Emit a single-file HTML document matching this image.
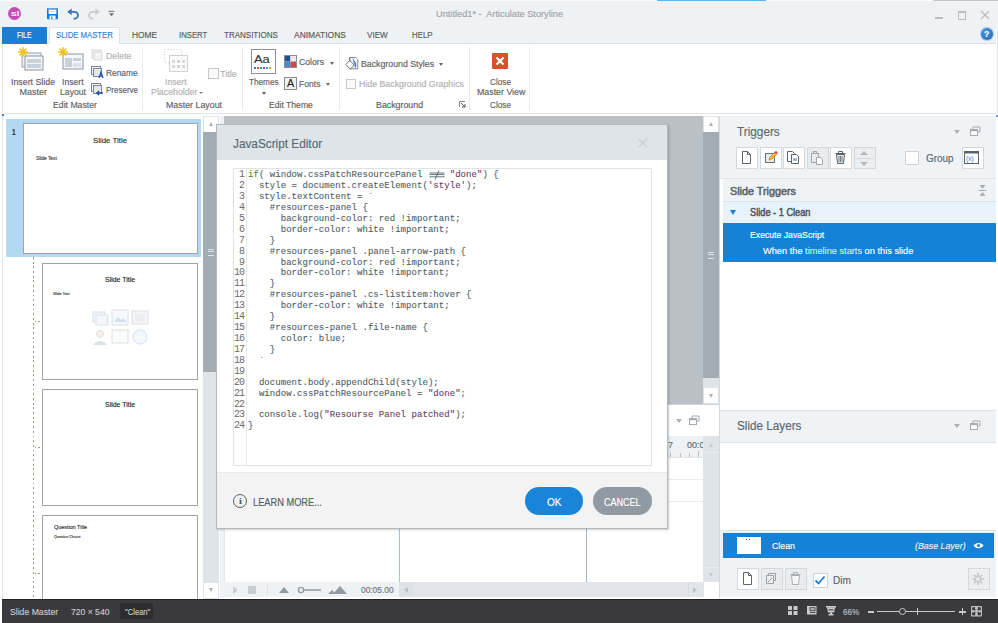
<!DOCTYPE html><html><head><meta charset="utf-8"><style>
html,body{margin:0;padding:0;width:998px;height:623px;overflow:hidden;background:#fff;}
body>div,body>svg{position:absolute;box-sizing:content-box;}
.t{white-space:pre;transform-origin:0 50%;-webkit-text-stroke:0.15px currentColor;}
.code{font-family:'Liberation Mono',monospace;font-size:9px;line-height:10.92px;white-space:pre;-webkit-text-stroke:0.1px currentColor;letter-spacing:0.05px;}
.ln{font-size:10px;letter-spacing:-1px;-webkit-text-stroke:0;}
.s{color:#6b3b60}
</style></head><body>
<div style="left:0px;top:0px;width:998px;height:27px;background:#eef2f5;"></div>
<div style="left:0px;top:0px;width:998px;height:1px;background:#fbfcfd;"></div>
<div style="left:657px;top:0px;width:109px;height:1px;background:#5ab4f0;"></div>
<div style="left:933px;top:0px;width:65px;height:1px;background:#c3c5c7;"></div>
<div style="left:8px;top:7px;width:13px;height:13px;border-radius:50%;background:#c34fb5;"></div>
<div id="t0" class="t" style="left:10.5px;top:7.80px;font-size:8px;line-height:11px;color:#fff;font-weight:normal;font-family:'Liberation Sans', sans-serif;transform:scaleX(1.4167);">sl</div>
<svg style="position:absolute;left:46.5px;top:8.4px" width="11" height="11.2" viewBox="0 0 11 11.2">
<rect x="0" y="0" width="11" height="11.2" rx="0.6" fill="#1a78d0"/><rect x="0.5" y="0" width="10" height="1.3" fill="#62a6e4"/>
<rect x="1.6" y="1.6" width="7.8" height="4.4" fill="#fff"/><rect x="3" y="3.2" width="5" height="0.9" fill="#c5d6e8"/>
<rect x="2.5" y="7.6" width="6" height="3.6" fill="#fff"/><rect x="4.2" y="8.6" width="1.3" height="2.6" fill="#1a78d0"/></svg>
<svg style="position:absolute;left:66px;top:7px" width="14" height="13" viewBox="0 0 14 13">
<path d="M1.2 4.8L5.6 1.4V8.2z" fill="#3a72b8"/><path d="M5 4.8H8.6A3.4 3.4 0 0 1 8.6 11.6H7.6" fill="none" stroke="#3a72b8" stroke-width="1.8"/></svg>
<svg style="position:absolute;left:87px;top:7px" width="14" height="13" viewBox="0 0 14 13">
<path d="M12.8 4.8L8.4 1.4V8.2z" fill="#c8ccd0"/><path d="M9 4.8H5.4A3.4 3.4 0 0 0 5.4 11.6H6.4" fill="none" stroke="#c8ccd0" stroke-width="1.8"/></svg>
<svg style="position:absolute;left:108px;top:10px" width="7" height="7" viewBox="0 0 7 7">
<rect x="0.5" y="0.8" width="6" height="1" fill="#707070"/><path d="M1 3.2h5l-2.5 3z" fill="#707070"/></svg>
<div id="t1" class="t" style="left:436px;top:8.01px;font-size:9px;line-height:13px;color:#a0a4a8;font-weight:normal;font-family:'Liberation Sans', sans-serif;transform:scaleX(1.0242);">Untitled1* -  Articulate Storyline</div>
<div style="left:935px;top:17px;width:8px;height:2px;background:#b9bdc1;"></div>
<div style="left:958px;top:11px;width:6px;height:6px;border:1px solid #b9bdc1;border-top-width:2px;"></div>
<svg style="position:absolute;left:980px;top:10px" width="10" height="10" viewBox="0 0 10 10">
<path d="M1 1l8 8M9 1l-8 8" stroke="#b9bdc1" stroke-width="1.1"/></svg>
<div style="left:0px;top:27px;width:998px;height:17px;background:#eef2f5;"></div>
<div style="left:2px;top:43px;width:996px;height:1px;background:#dde2e6;"></div>
<div style="left:2px;top:27px;width:45px;height:17px;background:#1a7fd4;"></div>
<div id="t2" class="t" style="left:17px;top:29.30px;font-size:8.5px;line-height:12px;color:#fff;font-weight:normal;font-family:'Liberation Sans', sans-serif;transform:scaleX(0.8056);">FILE</div>
<div style="left:49px;top:27px;width:69px;height:17px;background:#fff;border:1px solid #dde2e6;border-bottom:none;"></div>
<div id="t3" class="t" style="left:55.5px;top:29.30px;font-size:8.5px;line-height:12px;color:#2b7fd4;font-weight:normal;font-family:'Liberation Sans', sans-serif;transform:scaleX(0.9113);">SLIDE MASTER</div>
<div id="t4" class="t" style="left:132.4px;top:29.30px;font-size:8.5px;line-height:12px;color:#5a5a5a;font-weight:normal;font-family:'Liberation Sans', sans-serif;transform:scaleX(0.9846);">HOME</div>
<div id="t5" class="t" style="left:178.5px;top:29.30px;font-size:8.5px;line-height:12px;color:#5a5a5a;font-weight:normal;font-family:'Liberation Sans', sans-serif;transform:scaleX(0.9097);">INSERT</div>
<div id="t6" class="t" style="left:224px;top:29.30px;font-size:8.5px;line-height:12px;color:#5a5a5a;font-weight:normal;font-family:'Liberation Sans', sans-serif;transform:scaleX(0.9421);">TRANSITIONS</div>
<div id="t7" class="t" style="left:294px;top:29.30px;font-size:8.5px;line-height:12px;color:#5a5a5a;font-weight:normal;font-family:'Liberation Sans', sans-serif;transform:scaleX(0.9923);">ANIMATIONS</div>
<div id="t8" class="t" style="left:367px;top:29.30px;font-size:8.5px;line-height:12px;color:#5a5a5a;font-weight:normal;font-family:'Liberation Sans', sans-serif;transform:scaleX(0.9545);">VIEW</div>
<div id="t9" class="t" style="left:411.6px;top:29.30px;font-size:8.5px;line-height:12px;color:#5a5a5a;font-weight:normal;font-family:'Liberation Sans', sans-serif;transform:scaleX(0.9273);">HELP</div>
<div style="left:981px;top:28px;width:12px;height:12px;border-radius:50%;background:radial-gradient(circle at 40% 35%,#4a9be8,#1a5fb0);box-shadow:0 0 0 1px #a8c8ea;"></div>
<div id="t10" class="t" style="left:984.3px;top:28.01px;font-size:9px;line-height:13px;color:#fff;font-weight:bold;font-family:'Liberation Sans', sans-serif;transform:scaleX(0.9500);">?</div>
<div style="left:996px;top:27px;width:2px;height:571px;background:#fff;"></div>
<div style="left:997px;top:27px;width:1px;height:571px;background:#dfe3e6;"></div>
<div style="left:2px;top:44px;width:994px;height:69px;background:#fff;"></div>
<div style="left:2px;top:44px;width:1px;height:69px;background:#e3e6e9;"></div>
<div style="left:5px;top:113px;width:991px;height:1px;background:#dfe3e7;"></div>
<div style="left:142px;top:47px;width:1px;height:63px;background:#e8ebee;"></div>
<div style="left:242px;top:47px;width:1px;height:63px;background:#e8ebee;"></div>
<div style="left:339px;top:47px;width:1px;height:63px;background:#e8ebee;"></div>
<div style="left:469px;top:47px;width:1px;height:63px;background:#e8ebee;"></div>
<div style="left:529px;top:47px;width:1px;height:63px;background:#e8ebee;"></div>
<svg style="position:absolute;left:18px;top:46.5px" width="26" height="24" viewBox="0 0 26 24">
<rect x="4" y="6" width="19" height="14" fill="#eef0f4" stroke="#9aa3ad"/>
<rect x="7" y="9" width="18" height="14" fill="#f5f6f8" stroke="#8a95a2"/>
<rect x="9" y="12" width="14" height="4" fill="#c9d0da"/><rect x="9" y="17" width="14" height="4" fill="#c9d0da"/>
<g stroke="#f2c21a" stroke-width="1.5"><path d="M5 0v10M0 5h10M1.5 1.5l7 7M8.5 1.5l-7 7"/></g></svg>
<svg style="position:absolute;left:58px;top:47px" width="26" height="24" viewBox="0 0 26 24">
<rect x="5" y="7" width="20" height="15" fill="#f5f6f8" stroke="#8a95a2"/>
<rect x="7" y="11" width="7" height="9" fill="#c9d0da"/><rect x="15" y="11" width="8" height="3" fill="#c9d0da"/><rect x="15" y="16" width="8" height="4" fill="#dde2e8"/>
<g stroke="#f2c21a" stroke-width="1.5"><path d="M5 0v10M0 5h10M1.5 1.5l7 7M8.5 1.5l-7 7"/></g></svg>
<div id="t11" class="t" style="left:11px;top:75.71px;font-size:9px;line-height:13px;color:#5e5e5e;font-weight:normal;font-family:'Liberation Sans', sans-serif;transform:scaleX(0.9778);">Insert Slide</div>
<div id="t12" class="t" style="left:19.5px;top:86.11px;font-size:9px;line-height:13px;color:#5e5e5e;font-weight:normal;font-family:'Liberation Sans', sans-serif;">Master</div>
<div id="t13" class="t" style="left:61.5px;top:75.71px;font-size:9px;line-height:13px;color:#5e5e5e;font-weight:normal;font-family:'Liberation Sans', sans-serif;transform:scaleX(0.9565);">Insert</div>
<div id="t14" class="t" style="left:60px;top:86.11px;font-size:9px;line-height:13px;color:#5e5e5e;font-weight:normal;font-family:'Liberation Sans', sans-serif;transform:scaleX(0.9630);">Layout</div>
<div id="t15" class="t" style="left:52.6px;top:98.51px;font-size:9px;line-height:13px;color:#5e5e5e;font-weight:normal;font-family:'Liberation Sans', sans-serif;transform:scaleX(0.9652);">Edit Master</div>
<svg style="position:absolute;left:91px;top:49px" width="12" height="12" viewBox="0 0 12 12">
<rect x="1" y="1" width="9" height="8" fill="#f4f4f4" stroke="#d4d6d8"/><rect x="3" y="3" width="8" height="8" fill="#f4f4f4" stroke="#d4d6d8"/></svg>
<svg style="position:absolute;left:91px;top:66px" width="13" height="13" viewBox="0 0 13 13">
<rect x="0.5" y="0.5" width="9" height="8" fill="#eef0f3" stroke="#7d8895"/><rect x="2.5" y="2.5" width="8" height="8" fill="#e4e8ee" stroke="#7d8895"/><path d="M8 12l2-6 2 6M8.8 10h2.4" stroke="#2050a8" stroke-width="1.2" fill="none"/></svg>
<svg style="position:absolute;left:91px;top:83px" width="13" height="13" viewBox="0 0 13 13">
<rect x="0.5" y="0.5" width="9" height="8" fill="#eef0f3" stroke="#7d8895"/><rect x="2.5" y="2.5" width="8" height="8" fill="#e4e8ee" stroke="#7d8895"/><path d="M6 10h6M8 8l-2 2 2 2" stroke="#2050a8" stroke-width="1.6" fill="none"/></svg>
<div id="t16" class="t" style="left:106px;top:49.71px;font-size:9px;line-height:13px;color:#b4b4b4;font-weight:normal;font-family:'Liberation Sans', sans-serif;transform:scaleX(0.9808);">Delete</div>
<div id="t17" class="t" style="left:106px;top:66.91px;font-size:9px;line-height:13px;color:#5e5e5e;font-weight:normal;font-family:'Liberation Sans', sans-serif;transform:scaleX(0.9265);">Rename</div>
<div id="t18" class="t" style="left:106px;top:83.71px;font-size:9px;line-height:13px;color:#5e5e5e;font-weight:normal;font-family:'Liberation Sans', sans-serif;transform:scaleX(0.8889);">Preserve</div>
<svg style="position:absolute;left:163px;top:48px" width="26" height="25" viewBox="0 0 26 25">
<rect x="1.5" y="1.5" width="17" height="13" fill="none" stroke="#d6d9dc" stroke-dasharray="1.5 1.5"/>
<rect x="6.5" y="7.5" width="18" height="16" fill="#fbfbfb" stroke="#d0d3d6"/>
<g fill="#d6d9dc"><rect x="9" y="12" width="3" height="3"/><rect x="14" y="12" width="3" height="3"/><rect x="19" y="12" width="3" height="3"/><rect x="9" y="17" width="3" height="3"/><rect x="14" y="17" width="3" height="3"/><rect x="19" y="17" width="3" height="3"/></g></svg>
<div id="t19" class="t" style="left:165px;top:75.71px;font-size:9px;line-height:13px;color:#b0b0b0;font-weight:normal;font-family:'Liberation Sans', sans-serif;transform:scaleX(0.9565);">Insert</div>
<div id="t20" class="t" style="left:151px;top:86.11px;font-size:9px;line-height:13px;color:#b0b0b0;font-weight:normal;font-family:'Liberation Sans', sans-serif;transform:scaleX(0.9792);">Placeholder</div>
<div style="left:199px;top:92px;width:0;height:0;border-left:2.5px solid transparent;border-right:2.5px solid transparent;border-top:2.5px solid #888;"></div>
<div style="left:208px;top:68px;width:9px;height:9px;border:1px solid #c6c8ca;background:#fafafa;"></div>
<div id="t21" class="t" style="left:220px;top:67.71px;font-size:9px;line-height:13px;color:#b0b0b0;font-weight:normal;font-family:'Liberation Sans', sans-serif;">Title</div>
<div id="t22" class="t" style="left:166px;top:98.51px;font-size:9px;line-height:13px;color:#5e5e5e;font-weight:normal;font-family:'Liberation Sans', sans-serif;transform:scaleX(0.9825);">Master Layout</div>
<div style="left:251px;top:49px;width:23px;height:23px;border:1px solid #8a8f94;background:#fff;"></div>
<div id="t23" class="t" style="left:254px;top:51.63px;font-size:10.5px;line-height:15px;color:#333;font-weight:normal;font-family:'Liberation Sans', sans-serif;transform:scaleX(1.2308);">Aa</div>
<svg style="position:absolute;left:254px;top:67px" width="20" height="3" viewBox="0 0 20 3">
<g><rect x="0" y="0" width="2" height="2" fill="#3a78c9"/><rect x="3" y="0" width="2" height="2" fill="#e84a3c"/><rect x="6" y="0" width="2" height="2" fill="#2aa24a"/><rect x="9" y="0" width="2" height="2" fill="#8a4ac9"/><rect x="12" y="0" width="2" height="2" fill="#3aa8c9"/><rect x="15" y="0" width="2" height="2" fill="#f08a2a"/></g></svg>
<div id="t24" class="t" style="left:249px;top:76.11px;font-size:9px;line-height:13px;color:#5e5e5e;font-weight:normal;font-family:'Liberation Sans', sans-serif;transform:scaleX(0.9091);">Themes</div>
<div style="left:262px;top:92px;width:0;height:0;border-left:2.5px solid transparent;border-right:2.5px solid transparent;border-top:3px solid #666;"></div>
<svg style="position:absolute;left:284px;top:55px" width="13" height="13" viewBox="0 0 13 13">
<rect x="0.5" y="0.5" width="12" height="12" fill="#fff" stroke="#8a8f94"/><rect x="1" y="1" width="5.5" height="5.5" fill="#25508e"/><rect x="6.5" y="1" width="5.5" height="5.5" fill="#f1ecdf"/><rect x="1" y="6.5" width="5.5" height="5.5" fill="#4f87c6"/><rect x="6.5" y="6.5" width="5.5" height="5.5" fill="#cf4848"/></svg>
<div id="t25" class="t" style="left:299px;top:56.31px;font-size:9px;line-height:13px;color:#5e5e5e;font-weight:normal;font-family:'Liberation Sans', sans-serif;transform:scaleX(0.9615);">Colors</div>
<div style="left:330px;top:62px;width:0;height:0;border-left:2.5px solid transparent;border-right:2.5px solid transparent;border-top:3px solid #666;"></div>
<div style="left:284px;top:77px;width:11px;height:11px;border:1px solid #8a8f94;background:#eef0f4;"></div>
<div id="t26" class="t" style="left:286.5px;top:77.22px;font-size:10px;line-height:14px;color:#222;font-weight:normal;font-family:'Liberation Sans', sans-serif;transform:scaleX(1.0714);">A</div>
<div id="t27" class="t" style="left:299px;top:77.71px;font-size:9px;line-height:13px;color:#5e5e5e;font-weight:normal;font-family:'Liberation Sans', sans-serif;transform:scaleX(0.9565);">Fonts</div>
<div style="left:326px;top:83px;width:0;height:0;border-left:2.5px solid transparent;border-right:2.5px solid transparent;border-top:3px solid #666;"></div>
<div id="t28" class="t" style="left:269px;top:98.51px;font-size:9px;line-height:13px;color:#5e5e5e;font-weight:normal;font-family:'Liberation Sans', sans-serif;transform:scaleX(0.9565);">Edit Theme</div>
<svg style="position:absolute;left:345px;top:56px" width="14" height="14" viewBox="0 0 14 14">
<path d="M4.5 1.5H10.5L12.8 3.8V12.8H4.5z" fill="#f6f8fa" stroke="#808488"/><circle cx="11" cy="3" r="0.8" fill="#fff"/>
<path d="M7.5 2.5Q9 2.8 9.3 5Q12 6 11 11.5H9.8Q10.3 8 8.5 6.3z" fill="#2f73c0" opacity="0.9"/>
<path d="M0.8 8.5L4.8 4.5L9.3 9L5.3 13z" fill="#fff" stroke="#6a6e72"/><path d="M4.8 4.5V2.2" stroke="#6a6e72"/></svg>
<div id="t29" class="t" style="left:360.6px;top:57.51px;font-size:9px;line-height:13px;color:#5e5e5e;font-weight:normal;font-family:'Liberation Sans', sans-serif;transform:scaleX(0.9733);">Background Styles</div>
<div style="left:439px;top:63px;width:0;height:0;border-left:2.5px solid transparent;border-right:2.5px solid transparent;border-top:3px solid #666;"></div>
<div style="left:346px;top:79px;width:8px;height:8px;border:1px solid #c6c8ca;background:#fafafa;"></div>
<div id="t30" class="t" style="left:358.6px;top:78.31px;font-size:9px;line-height:13px;color:#b0b0b0;font-weight:normal;font-family:'Liberation Sans', sans-serif;transform:scaleX(0.9759);">Hide Background Graphics</div>
<div id="t31" class="t" style="left:376px;top:98.51px;font-size:9px;line-height:13px;color:#5e5e5e;font-weight:normal;font-family:'Liberation Sans', sans-serif;transform:scaleX(0.9792);">Background</div>
<svg style="position:absolute;left:459px;top:101px" width="7" height="7" viewBox="0 0 7 7">
<path d="M0.5 6V0.5H6" fill="none" stroke="#888"/><path d="M2 2l4 4M6 3v3H3" fill="none" stroke="#555"/></svg>
<div style="left:492px;top:53px;width:16px;height:16px;background:#d9512c;border-radius:1px;"></div>
<svg style="position:absolute;left:492px;top:53px" width="16" height="16" viewBox="0 0 16 16">
<path d="M4.5 4.5l7 7M11.5 4.5l-7 7" stroke="#fff" stroke-width="2.2"/></svg>
<div id="t32" class="t" style="left:490px;top:76.11px;font-size:9px;line-height:13px;color:#5e5e5e;font-weight:normal;font-family:'Liberation Sans', sans-serif;transform:scaleX(0.9130);">Close</div>
<div id="t33" class="t" style="left:477px;top:86.11px;font-size:9px;line-height:13px;color:#5e5e5e;font-weight:normal;font-family:'Liberation Sans', sans-serif;transform:scaleX(0.9796);">Master View</div>
<div id="t34" class="t" style="left:490px;top:98.51px;font-size:9px;line-height:13px;color:#5e5e5e;font-weight:normal;font-family:'Liberation Sans', sans-serif;transform:scaleX(0.9130);">Close</div>
<div style="left:0px;top:114px;width:998px;height:485px;background:#fff;"></div>
<div style="left:2px;top:114px;width:1px;height:485px;background:#e3e6e9;"></div>
<div style="left:2px;top:114px;width:2px;height:2px;background:#2a7fd4;"></div>
<div style="left:6px;top:119px;width:195px;height:138px;background:#b3d8f3;"></div>
<div style="left:23px;top:123px;width:173px;height:129px;border:1px solid #a3a3a3;background:#fff;"></div>
<div id="t35" class="t" style="left:12.2px;top:126.21px;font-size:9px;line-height:13px;color:#333;font-weight:bold;font-family:'Liberation Sans', sans-serif;transform:scaleX(0.7200);">1</div>
<div id="t36" class="t" style="left:93.3px;top:135.20px;font-size:8px;line-height:11px;color:#1a1a1a;font-weight:normal;font-family:'Liberation Sans', sans-serif;transform:scaleX(0.9800);-webkit-text-stroke:0.1px #1a1a1a;">Slide Title</div>
<div id="t37" class="t" style="left:35.8px;top:155.85px;font-size:4.5px;line-height:6px;color:#444;font-weight:normal;font-family:'Liberation Sans', sans-serif;transform:scaleX(1.0684);">Slide Text</div>
<div style="left:33px;top:257px;width:1px;height:341px;background:repeating-linear-gradient(to bottom,#a49c80 0,#a49c80 1.8px,transparent 1.8px,transparent 4.7px);"></div>
<div style="left:35px;top:321px;width:7px;height:1px;background:repeating-linear-gradient(to right,#a49c80 0,#a49c80 1.5px,transparent 1.5px,transparent 3.5px);"></div>
<div style="left:35px;top:447px;width:7px;height:1px;background:repeating-linear-gradient(to right,#a49c80 0,#a49c80 1.5px,transparent 1.5px,transparent 3.5px);"></div>
<div style="left:35px;top:573px;width:7px;height:1px;background:repeating-linear-gradient(to right,#a49c80 0,#a49c80 1.5px,transparent 1.5px,transparent 3.5px);"></div>
<div style="left:42px;top:263px;width:154px;height:115px;border:1px solid #a3a3a3;background:#fff;"></div>
<div id="t38" class="t" style="left:104.5px;top:274.58px;font-size:6.5px;line-height:9px;color:#1a1a1a;font-weight:normal;font-family:'Liberation Sans', sans-serif;transform:scaleX(1.0714);-webkit-text-stroke:0.12px #1a1a1a;">Slide Title</div>
<div id="t39" class="t" style="left:52.6px;top:292.24px;font-size:3.5px;line-height:5px;color:#444;font-weight:normal;font-family:'Liberation Sans', sans-serif;transform:scaleX(1.0933);">Slide Text</div>
<svg style="position:absolute;left:90px;top:309px" width="60" height="40" viewBox="0 0 60 40" opacity="0.35">
<rect x="3" y="3" width="12" height="10" fill="#cfe0ef" stroke="#9ab"/><rect x="6" y="6" width="12" height="10" fill="#dde8f2" stroke="#9ab"/>
<rect x="22" y="1" width="16" height="15" fill="#e8f0f8" stroke="#9ab"/><path d="M24 13l4-5 3 3 2-2 4 4z" fill="#7aa6d6"/>
<rect x="42" y="2" width="16" height="13" fill="#e0e4e8" stroke="#9ab"/><rect x="45" y="5" width="10" height="7" fill="#c8ced4"/>
<circle cx="10" cy="25" r="3.5" fill="#f0d8c0" stroke="#9ab"/><path d="M4 36c0-5 12-5 12 0z" fill="#9ab"/>
<rect x="22" y="21" width="16" height="13" fill="#f2f4f6" stroke="#9ab"/>
<circle cx="50" cy="28" r="7" fill="#dcecf8" stroke="#7aa6d6"/></svg>
<div style="left:42px;top:389px;width:154px;height:115px;border:1px solid #a3a3a3;background:#fff;"></div>
<div id="t40" class="t" style="left:104.5px;top:400.28px;font-size:6.5px;line-height:9px;color:#1a1a1a;font-weight:normal;font-family:'Liberation Sans', sans-serif;transform:scaleX(1.0714);-webkit-text-stroke:0.12px #1a1a1a;">Slide Title</div>
<div style="left:42px;top:515px;width:154px;height:100px;border:1px solid #a3a3a3;border-bottom:none;background:#fff;"></div>
<div id="t41" class="t" style="left:53.5px;top:522.57px;font-size:5.5px;line-height:8px;color:#333;font-weight:normal;font-family:'Liberation Sans', sans-serif;transform:scaleX(0.9853);">Question Title</div>
<div id="t42" class="t" style="left:53.5px;top:534.54px;font-size:3.5px;line-height:5px;color:#444;font-weight:normal;font-family:'Liberation Sans', sans-serif;transform:scaleX(1.0192);">Question Choice</div>
<div style="left:203px;top:116px;width:16px;height:482px;background:#dfe4e8;"></div>
<div style="left:203px;top:116px;width:14px;height:15px;border:1px solid #dfe3e6;border-bottom:none;background:#fff;"></div>
<div style="left:208.5px;top:122px;width:0;height:0;border-left:2.5px solid transparent;border-right:2.5px solid transparent;border-bottom:4.5px solid #a9b2b8;"></div>
<div style="left:203px;top:132px;width:16px;height:240px;background:#a3acb2;"></div>
<div style="left:208px;top:249px;width:6px;height:5px;border-top:1px solid #dfe4e8;border-bottom:1px solid #dfe4e8;"></div><div style="left:208px;top:251px;width:6px;height:1px;background:#dfe4e8;"></div>
<div style="left:203px;top:582px;width:14px;height:15px;border:1px solid #dfe3e6;background:#fff;"></div>
<div style="left:208.5px;top:588px;width:0;height:0;border-left:2.5px solid transparent;border-right:2.5px solid transparent;border-top:4.5px solid #a9b2b8;"></div>
<div style="left:220px;top:116px;width:4px;height:482px;background:#f1f2f3;"></div>
<div style="left:224px;top:116px;width:1px;height:482px;background:#e4e8eb;"></div>
<div style="left:224px;top:116px;width:479px;height:288px;background:#b9c0c6;"></div>
<div style="left:703px;top:116px;width:16px;height:288px;background:#dfe4e8;"></div>
<div style="left:703px;top:116px;width:14px;height:15px;border:1px solid #dfe3e6;border-bottom:none;background:#fff;"></div>
<div style="left:708.5px;top:122px;width:0;height:0;border-left:2.5px solid transparent;border-right:2.5px solid transparent;border-bottom:4.5px solid #a9b2b8;"></div>
<div style="left:703px;top:132px;width:16px;height:246px;background:#a3acb2;"></div>
<div style="left:708px;top:252px;width:6px;height:5px;border-top:1px solid #dfe4e8;border-bottom:1px solid #dfe4e8;"></div><div style="left:708px;top:254px;width:6px;height:1px;background:#dfe4e8;"></div>
<div style="left:703px;top:388px;width:14px;height:15px;border:1px solid #dfe3e6;border-top:none;background:#fff;"></div>
<div style="left:708.5px;top:394px;width:0;height:0;border-left:2.5px solid transparent;border-right:2.5px solid transparent;border-top:4.5px solid #a9b2b8;"></div>
<div style="left:224px;top:404px;width:495px;height:1px;background:#cdd3d8;"></div>
<div style="left:676px;top:419px;width:0;height:0;border-left:3.5px solid transparent;border-right:3.5px solid transparent;border-top:4px solid #a9b1b7;"></div>
<svg style="position:absolute;left:689px;top:415px" width="11" height="11" viewBox="0 0 11 11">
<path d="M3 3.5V1h7v5H8" fill="none" stroke="#a3abb1"/><rect x="0.5" y="3.5" width="7" height="6" fill="#fff" stroke="#a3abb1"/><rect x="1" y="4" width="6" height="1.2" fill="#a3abb1"/></svg>
<div style="left:224px;top:436px;width:479px;height:21px;background:#eef2f5;"></div>
<div style="left:224px;top:436px;width:479px;height:21px;overflow:hidden;"><div class="t" style="left:463px;top:-1px;font-size:9px;line-height:21px;color:#4d6b88;position:absolute;font-family:Liberation Sans;">00:00</div></div>
<div id="t43" class="t" style="left:668px;top:439.01px;font-size:9px;line-height:13px;color:#5e6f7d;font-weight:normal;font-family:'Liberation Sans', sans-serif;">7</div>
<div style="left:670px;top:453px;width:1px;height:4px;background:#b9c1c7;"></div>
<div style="left:680px;top:453px;width:1px;height:4px;background:#b9c1c7;"></div>
<div style="left:689px;top:453px;width:1px;height:4px;background:#b9c1c7;"></div>
<div style="left:698px;top:451px;width:1px;height:6px;background:#b9c1c7;"></div>
<div style="left:224px;top:457px;width:479px;height:1px;background:#e2e6ea;"></div>
<div style="left:224px;top:479px;width:479px;height:1px;background:#e8ebee;"></div>
<div style="left:224px;top:501px;width:479px;height:1px;background:#e8ebee;"></div>
<div style="left:399px;top:458px;width:1px;height:124px;background:#9cc3e6;"></div>
<div style="left:586px;top:458px;width:1px;height:124px;background:#a9b2b8;"></div>
<div style="left:703px;top:436px;width:16px;height:146px;background:#dfe4e8;"></div>
<div style="left:708.5px;top:443px;width:0;height:0;border-left:2.5px solid transparent;border-right:2.5px solid transparent;border-bottom:4.5px solid #c3c9ce;"></div>
<div style="left:703px;top:452px;width:16px;height:1px;background:#e9ecef;"></div>
<div style="left:703px;top:567px;width:16px;height:1px;background:#e9ecef;"></div>
<div style="left:708.5px;top:573px;width:0;height:0;border-left:2.5px solid transparent;border-right:2.5px solid transparent;border-top:4.5px solid #c3c9ce;"></div>
<div style="left:224px;top:582px;width:175px;height:15px;background:#eef2f5;"></div>
<div style="left:233px;top:586px;width:0;height:0;border-top:4px solid transparent;border-bottom:4px solid transparent;border-left:5px solid #c8ced3;"></div>
<div style="left:248px;top:586px;width:8px;height:8px;background:#c8ced3;"></div>
<div style="left:267px;top:585px;width:1px;height:11px;background:#dde2e6;"></div>
<div style="left:279px;top:587px;width:0;height:0;border-left:5px solid transparent;border-right:5px solid transparent;border-bottom:6px solid #8f9aa2;"></div>
<svg style="position:absolute;left:296px;top:585px" width="26" height="10" viewBox="0 0 26 10">
<path d="M6 5h19" stroke="#8f9aa2" stroke-width="1.5"/><circle cx="5" cy="5" r="2.6" fill="#eef2f5" stroke="#8f9aa2" stroke-width="1.4"/></svg>
<div style="left:328px;top:590px;width:0;height:0;border-left:4px solid transparent;border-right:4px solid transparent;border-bottom:4px solid #8f9aa2;"></div>
<div style="left:333px;top:586px;width:0;height:0;border-left:7px solid transparent;border-right:7px solid transparent;border-bottom:8px solid #8f9aa2;"></div>
<div id="t44" class="t" style="left:360.5px;top:584.31px;font-size:9px;line-height:13px;color:#6b757c;font-weight:normal;font-family:'Liberation Sans', sans-serif;transform:scaleX(0.9286);">00:05.00</div>
<div style="left:399px;top:582px;width:305px;height:15px;background:#e2e6ea;"></div>
<div style="left:399px;top:582px;width:14px;height:15px;background:#dde2e6;"></div>
<div style="left:404px;top:587px;width:0;height:0;border-top:3.5px solid transparent;border-bottom:3.5px solid transparent;border-right:4px solid #b9c0c6;"></div>
<div style="left:688px;top:582px;width:1px;height:15px;background:#d6dbdf;"></div>
<div style="left:693px;top:587px;width:0;height:0;border-top:3.5px solid transparent;border-bottom:3.5px solid transparent;border-left:4px solid #b9c0c6;"></div>
<div style="left:704px;top:582px;width:15px;height:17px;background:#fff;"></div>
<div style="left:216px;top:124px;width:450px;height:403px;border:1px solid #b4b9bd;background:#fff;box-shadow:1px 1px 2px rgba(0,0,0,0.2);"></div>
<div style="left:217px;top:125px;width:450px;height:35px;background:#dfe4e8;"></div>
<div id="t45" class="t" style="left:232.8px;top:136.15px;font-size:12.2px;line-height:17px;color:#5b6a72;font-weight:normal;font-family:'Liberation Sans', sans-serif;transform:scaleX(0.9674);">JavaScript Editor</div>
<svg style="position:absolute;left:638px;top:138px" width="10" height="10" viewBox="0 0 10 10">
<path d="M1 1l8 8M9 1l-8 8" stroke="#cbcdcf" stroke-width="1.3"/></svg>
<div style="left:233px;top:168px;width:417px;height:296px;border:1px solid #dfe3e6;background:#fff;"></div>
<div style="left:246px;top:169px;width:1px;height:296px;background:#e9e9e9;"></div>
<div class="code ln" style="left:222px;top:170.20px;width:22px;text-align:right;color:#6b6b6b;">1
2
3
4
5
6
7
8
9
10
11
12
13
14
15
16
17
18
19
20
21
22
23
24</div>
<div class="code" style="left:248px;top:170.20px;width:400px;color:#4e5d64;"><span style="color:#5c7d3b">if</span>( window.cssPatchResourcePanel     <span class="s">"done"</span>) {
  style = document.createElement(<span class="s">'style'</span>);
  style.textContent = `
    #resources-panel {
      background-color: red !important;
      border-color: white !important;
    }
    #resources-panel .panel-arrow-path {
      background-color: red !important;
      border-color: white !important;
    }
    #resources-panel .cs-listitem:hover {
      border-color: white !important;
    }
    #resources-panel .file-name {
      color: blue;
    }
  `

  document.body.appendChild(style);
  window.cssPatchResourcePanel = <span class="s">"done"</span>;

  console.log(<span class="s">"Resourse Panel patched"</span>);
}</div>
<svg style="position:absolute;left:428.5px;top:169.5px" width="16" height="10" viewBox="0 0 16 10"><path d="M0.5 3h15M0.5 4.6h15M0.5 6.8h15" stroke="#56646b" stroke-width="0.9"/><path d="M10 0.5L6 9.5" stroke="#56646b" stroke-width="0.9"/></svg>
<div style="left:217px;top:473px;width:450px;height:55px;background:#f3f3f3;"></div>
<div style="left:217px;top:472px;width:450px;height:1px;background:#e6e9eb;"></div>
<div style="left:233px;top:494px;width:12px;height:12px;border:1.6px solid #4f5f66;border-radius:50%;"></div>
<div id="t46" class="t" style="left:238.7px;top:495.21px;font-size:9px;line-height:13px;color:#4f5f66;font-weight:bold;font-family:'Liberation Serif', serif;transform:scaleX(1.1667);">i</div>
<div id="t47" class="t" style="left:252.6px;top:495.52px;font-size:10px;line-height:14px;color:#4f5f66;font-weight:normal;font-family:'Liberation Sans', sans-serif;transform:scaleX(0.9257);">LEARN MORE...</div>
<div style="left:524.5px;top:487.3px;width:58.7px;height:28px;border-radius:14px;background:#1a84d8;"></div>
<div id="t48" class="t" style="left:547px;top:495.82px;font-size:10px;line-height:14px;color:#fff;font-weight:normal;font-family:'Liberation Sans', sans-serif;">OK</div>
<div style="left:593px;top:487.3px;width:58.8px;height:28px;border-radius:14px;background:#8f9aa2;"></div>
<div id="t49" class="t" style="left:604px;top:495.82px;font-size:10px;line-height:14px;color:#fff;font-weight:normal;font-family:'Liberation Sans', sans-serif;transform:scaleX(0.9024);">CANCEL</div>
<div style="left:719px;top:116px;width:277px;height:482px;background:#fff;"></div>
<div style="left:996px;top:115px;width:2px;height:2px;background:#2a7fd4;border-radius:1px;"></div>
<div style="left:719px;top:116px;width:1px;height:482px;background:#d3d9de;"></div>
<div style="left:720px;top:116px;width:276px;height:62px;background:#eff3f6;"></div>
<div style="left:720px;top:178px;width:276px;height:1px;background:#dde3e8;"></div>
<div id="t50" class="t" style="left:737px;top:123.05px;font-size:12.6px;line-height:18px;color:#5c6870;font-weight:normal;font-family:'Liberation Sans', sans-serif;transform:scaleX(0.9348);">Triggers</div>
<div style="left:954px;top:130px;width:0;height:0;border-left:3.5px solid transparent;border-right:3.5px solid transparent;border-top:4px solid #a9b1b7;"></div>
<svg style="position:absolute;left:970px;top:126px" width="11" height="11" viewBox="0 0 11 11">
<path d="M3 3.5V1h7v5H8" fill="none" stroke="#a3abb1"/><rect x="0.5" y="3.5" width="7" height="6" fill="#fff" stroke="#a3abb1"/><rect x="1" y="4" width="6" height="1.2" fill="#a3abb1"/></svg>
<div style="left:736px;top:147px;width:20px;height:20px;border:1px solid #d2d8dc;background:#fff;"></div>
<div style="left:760px;top:147px;width:20px;height:20px;border:1px solid #d2d8dc;background:#fff;"></div>
<div style="left:783px;top:147px;width:20px;height:20px;border:1px solid #d2d8dc;background:#fff;"></div>
<div style="left:806.5px;top:147px;width:20px;height:20px;border:1px solid #d2d8dc;background:#e9ecee;"></div>
<div style="left:830px;top:147px;width:20px;height:20px;border:1px solid #d2d8dc;background:#fff;"></div>
<div style="left:853.5px;top:147px;width:20px;height:20px;border:1px solid #d2d8dc;background:#eceff1;"></div>
<div style="left:961.5px;top:147px;width:20px;height:20px;border:1px solid #d2d8dc;background:#fff;"></div>
<div style="left:854px;top:158px;width:20px;height:1px;background:#d2d8dc;"></div>
<svg style="position:absolute;left:738px;top:149px" width="17" height="17" viewBox="0 0 17 17"><path d="M4.5 2.5h5l3 3v9h-8z M9.5 2.5v3h3" fill="#fff" stroke="#5a646c"/></svg>
<svg style="position:absolute;left:762px;top:149px" width="17" height="17" viewBox="0 0 17 17"><rect x="3.5" y="4.5" width="9" height="9" fill="#e7e9eb" stroke="#6a737a"/><path d="M7 11l1-3 5-5 2 2-5 5z" fill="#f5b82e" stroke="#b07010" stroke-width="0.6"/><circle cx="14" cy="3.5" r="1.5" fill="#e84a4a"/></svg>
<svg style="position:absolute;left:785px;top:149px" width="17" height="17" viewBox="0 0 17 17"><path d="M2.5 2.5h5l2 2v8h-7z" fill="#fff" stroke="#5a646c"/><path d="M6.5 5.5h5l2 2v7h-7z" fill="#fff" stroke="#5a646c"/><rect x="8" y="9" width="4" height="3" fill="#aab4d8"/></svg>
<svg style="position:absolute;left:808px;top:149px" width="17" height="17" viewBox="0 0 17 17"><rect x="3.5" y="4.5" width="7" height="9" fill="none" stroke="#a0a8ae"/><rect x="5.5" y="2.5" width="3" height="2" fill="none" stroke="#a0a8ae"/><path d="M8.5 8.5h4l2 2v5h-6z" fill="#fff" stroke="#a0a8ae"/></svg>
<svg style="position:absolute;left:832px;top:149px" width="17" height="17" viewBox="0 0 17 17"><path d="M3.5 4.5h10M6.5 4.5v-2h4v2" fill="none" stroke="#5a646c"/><path d="M4.5 5.5l1 9h6l1-9z" fill="#e6e9eb" stroke="#5a646c"/><path d="M7 7v6M8.5 7v6M10 7v6" stroke="#5a646c" stroke-width="0.8"/></svg>
<div style="left:860px;top:151px;width:0;height:0;border-left:4px solid transparent;border-right:4px solid transparent;border-bottom:4px solid #b5bcc1;"></div>
<div style="left:860px;top:162px;width:0;height:0;border-left:4px solid transparent;border-right:4px solid transparent;border-top:4px solid #b5bcc1;"></div>
<div style="left:905px;top:151px;width:12px;height:12px;border:1px solid #cdd3d8;background:#fff;"></div>
<div id="t51" class="t" style="left:926px;top:151.72px;font-size:10.3px;line-height:14px;color:#5c6870;font-weight:normal;font-family:'Liberation Sans', sans-serif;transform:scaleX(0.9655);">Group</div>
<svg style="position:absolute;left:963px;top:149px" width="17" height="17" viewBox="0 0 17 17"><rect x="1.5" y="2.5" width="14" height="12" fill="#fff" stroke="#5a646c"/><rect x="1.5" y="2.5" width="14" height="2" fill="#5a646c"/><text x="3" y="12" font-size="6.5" font-family="Liberation Sans" fill="#3a70c9">(x)</text></svg>
<div style="left:723px;top:179px;width:273px;height:22px;background:#eff3f6;"></div>
<div style="left:723px;top:201px;width:273px;height:1px;background:#dde3e8;"></div>
<div id="t52" class="t" style="left:729.5px;top:183.63px;font-size:10.5px;line-height:15px;color:#5a5f63;font-weight:normal;font-family:'Liberation Sans', sans-serif;transform:scaleX(1.0281);-webkit-text-stroke:0.5px #5a5f63;">Slide Triggers</div>
<svg style="position:absolute;left:978px;top:184px" width="9" height="13" viewBox="0 0 9 13"><path d="M1.6 1h5.8L4.5 4.9z M1.6 11.8h5.8L4.5 7.9z" fill="#a4acb2"/><rect x="0.6" y="6" width="7.8" height="1" fill="#a4acb2"/></svg>
<div style="left:723px;top:202px;width:273px;height:21px;background:#e6f3fc;"></div>
<div style="left:729.5px;top:210px;width:0;height:0;border-left:3.5px solid transparent;border-right:3.5px solid transparent;border-top:5px solid #1a7fd4;"></div>
<div id="t53" class="t" style="left:750.4px;top:205.13px;font-size:10.5px;line-height:15px;color:#4f5459;font-weight:normal;font-family:'Liberation Sans', sans-serif;transform:scaleX(0.8783);-webkit-text-stroke:0.5px #4f5459;">Slide - 1 Clean</div>
<div style="left:723px;top:223px;width:273px;height:39px;background:#1582d6;"></div>
<div id="t54" class="t" style="left:750.4px;top:228.32px;font-size:9.8px;line-height:14px;color:#fff;font-weight:normal;font-family:'Liberation Sans', sans-serif;transform:scaleX(0.8857);">Execute JavaScript</div>
<div id="t55" class="t" style="left:762.6px;top:243.62px;font-size:9.8px;line-height:14px;color:#fff;font-weight:normal;font-family:'Liberation Sans', sans-serif;transform:scaleX(0.9425);">When the <span style="color:#c8f4c8">timeline starts</span> on this slide</div>
<div style="left:720px;top:410px;width:276px;height:1px;background:#dde3e8;"></div>
<div style="left:720px;top:411px;width:276px;height:31px;background:#eff3f6;"></div>
<div style="left:720px;top:442px;width:276px;height:1px;background:#dde3e8;"></div>
<div id="t56" class="t" style="left:736.5px;top:417.45px;font-size:12.6px;line-height:18px;color:#5c6870;font-weight:normal;font-family:'Liberation Sans', sans-serif;transform:scaleX(0.9304);">Slide Layers</div>
<div style="left:954px;top:424px;width:0;height:0;border-left:3.5px solid transparent;border-right:3.5px solid transparent;border-top:4px solid #a9b1b7;"></div>
<svg style="position:absolute;left:970px;top:420px" width="11" height="11" viewBox="0 0 11 11">
<path d="M3 3.5V1h7v5H8" fill="none" stroke="#a3abb1"/><rect x="0.5" y="3.5" width="7" height="6" fill="#fff" stroke="#a3abb1"/><rect x="1" y="4" width="6" height="1.2" fill="#a3abb1"/></svg>
<div style="left:720px;top:530px;width:276px;height:1px;background:#dde3e8;"></div>
<div style="left:720px;top:531px;width:276px;height:66px;background:#eff3f6;"></div>
<div style="left:723px;top:533px;width:271px;height:25px;background:#1582d6;"></div>
<div style="left:737px;top:537px;width:24px;height:17px;background:#fff;"></div>
<div style="left:746px;top:539px;width:1px;height:1px;background:#555;"></div>
<div style="left:749px;top:539px;width:1px;height:1px;background:#555;"></div>
<div id="t57" class="t" style="left:771.7px;top:538.92px;font-size:9.8px;line-height:14px;color:#fff;font-weight:normal;font-family:'Liberation Sans', sans-serif;transform:scaleX(0.8962);">Clean</div>
<div id="t58" class="t" style="left:914.6px;top:538.82px;font-size:9.8px;line-height:14px;color:#e9f3fb;font-weight:normal;font-family:'Liberation Sans', sans-serif;font-style:italic;transform:scaleX(0.9018);">(Base Layer)</div>
<svg style="position:absolute;left:973px;top:541px" width="11" height="9" viewBox="0 0 11 9"><path d="M0.5 4.5C2.5 1 8.5 1 10.5 4.5C8.5 8 2.5 8 0.5 4.5z" fill="#fff"/><circle cx="5.5" cy="4.5" r="1.6" fill="#1582d6"/></svg>
<div style="left:736.5px;top:568px;width:20px;height:20px;border:1px solid #d2d8dc;background:#fff;"></div>
<div style="left:760.5px;top:568px;width:20px;height:20px;border:1px solid #d2d8dc;background:#e9ecee;"></div>
<div style="left:784.5px;top:568px;width:20px;height:20px;border:1px solid #d2d8dc;background:#e9ecee;"></div>
<div style="left:967.5px;top:568px;width:20px;height:20px;border:1px solid #d2d8dc;background:#eceeef;"></div>
<svg style="position:absolute;left:739px;top:570px" width="17" height="17" viewBox="0 0 17 17"><path d="M4.5 2.5h5l3 3v9h-8z M9.5 2.5v3h3" fill="#fff" stroke="#5a646c"/></svg>
<svg style="position:absolute;left:763px;top:570px" width="17" height="17" viewBox="0 0 17 17"><path d="M5.5 3.5h7v7h-7z" fill="#eee" stroke="#9aa2a8"/><path d="M3.5 5.5h7v8h-7z" fill="#eee" stroke="#9aa2a8"/><path d="M5 12l4-4" stroke="#9aa2a8"/></svg>
<svg style="position:absolute;left:787px;top:570px" width="17" height="17" viewBox="0 0 17 17"><path d="M3.5 4.5h10M6.5 4.5v-2h4v2" fill="none" stroke="#a9b0b5"/><path d="M4.5 5.5l1 9h6l1-9z" fill="#f4f5f6" stroke="#a9b0b5"/></svg>
<div style="left:812.5px;top:573px;width:13px;height:13px;border:1px solid #cdd3d8;background:#fff;"></div>
<svg style="position:absolute;left:814px;top:575px" width="12" height="11" viewBox="0 0 12 11"><path d="M1.5 5.5l3 3 6-7" fill="none" stroke="#1a7fd4" stroke-width="1.8"/></svg>
<div id="t59" class="t" style="left:833.4px;top:574.12px;font-size:10.3px;line-height:14px;color:#5c6870;font-weight:normal;font-family:'Liberation Sans', sans-serif;transform:scaleX(0.9778);">Dim</div>
<svg style="position:absolute;left:971px;top:572px" width="14" height="14" viewBox="0 0 14 14"><g stroke="#c5cacd" stroke-width="1.6"><path d="M7 1v12M1 7h12M2.8 2.8l8.4 8.4M11.2 2.8l-8.4 8.4"/></g><circle cx="7" cy="7" r="3.6" fill="#c5cacd"/><circle cx="7" cy="7" r="1.9" fill="#eceeef"/></svg>
<div style="left:2px;top:599px;width:996px;height:24px;background:#3a393e;"></div>
<div style="left:2px;top:599px;width:996px;height:1px;background:#222126;"></div>
<div id="t60" class="t" style="left:9.6px;top:606.11px;font-size:9.3px;line-height:13px;color:#c9c9cb;font-weight:normal;font-family:'Liberation Sans', sans-serif;transform:scaleX(0.9308);">Slide Master</div>
<div id="t61" class="t" style="left:71px;top:605.91px;font-size:9.3px;line-height:13px;color:#c9c9cb;font-weight:normal;font-family:'Liberation Sans', sans-serif;transform:scaleX(0.9238);">720 × 540</div>
<div style="left:120px;top:603px;width:33px;height:16px;background:#2d2c31;"></div>
<div id="t62" class="t" style="left:124.6px;top:605.91px;font-size:9.3px;line-height:13px;color:#c9c9cb;font-weight:normal;font-family:'Liberation Sans', sans-serif;transform:scaleX(0.8194);">&quot;Clean&quot;</div>
<div style="left:788px;top:606px;width:4px;height:4px;background:#c9c9cb;box-shadow:5.5px 0 0 #c9c9cb,0 5px 0 #c9c9cb,5.5px 5px 0 #c9c9cb;"></div>
<svg style="position:absolute;left:806.5px;top:606px" width="10" height="9" viewBox="0 0 10 9"><rect x="0" y="0" width="9.5" height="8.5" fill="#c9c9cb"/><rect x="2.5" y="1.2" width="6" height="3.6" fill="#4a494e"/><rect x="3.5" y="2.2" width="4" height="1.6" fill="#c9c9cb"/><rect x="3" y="5.8" width="5.5" height="1.2" fill="#4a494e"/></svg>
<svg style="position:absolute;left:826px;top:606px" width="10" height="10" viewBox="0 0 10 10"><rect x="0" y="0" width="10" height="1.6" fill="#c9c9cb"/><path d="M1 1.6h8l-1 5h-6z" fill="#c9c9cb"/><rect x="2.6" y="3.2" width="4.8" height="1.2" fill="#4a494e"/><path d="M4 6.6h2v1.5h1.5v1.4h-5v-1.4h1.5z" fill="#c9c9cb"/></svg>
<div id="t63" class="t" style="left:843px;top:605.81px;font-size:9.3px;line-height:13px;color:#b9c1ca;font-weight:normal;font-family:'Liberation Sans', sans-serif;transform:scaleX(0.8737);">66%</div>
<div style="left:868px;top:611px;width:6px;height:1.5px;background:#c9c9cb;"></div>
<div style="left:877px;top:611px;width:78px;height:1px;background:#c9c9cb;"></div>
<div style="left:917px;top:608px;width:1px;height:7px;background:#c9c9cb;"></div>
<div style="left:899px;top:607.5px;width:5px;height:5px;border:1.3px solid #c9c9cb;border-radius:50%;background:#3a393e;"></div>
<div style="left:959px;top:611px;width:7px;height:1.5px;background:#c9c9cb;"></div>
<div style="left:961.75px;top:608px;width:1.5px;height:7px;background:#c9c9cb;"></div>
<svg style="position:absolute;left:971px;top:605.5px" width="11" height="11" viewBox="0 0 11 11"><rect x="0" y="0" width="11" height="10.5" rx="0.8" fill="#bdbdc0"/><path d="M1.5 1.5L4.3 4.3M9.5 1.5L6.7 4.3M1.5 9L4.3 6.2M9.5 9L6.7 6.2" stroke="#2e2d32" stroke-width="1.5"/><path d="M1.2 1.2h3v1.2h-3zM1.2 1.2v3h1.2v-3zM9.8 1.2h-3v1.2h3zM9.8 1.2v3h-1.2v-3zM1.2 9.3h3v-1.2h-3zM1.2 9.3v-3h1.2v3zM9.8 9.3h-3v-1.2h3zM9.8 9.3v-3h-1.2v3z" fill="#2e2d32"/></svg>
</body></html>
